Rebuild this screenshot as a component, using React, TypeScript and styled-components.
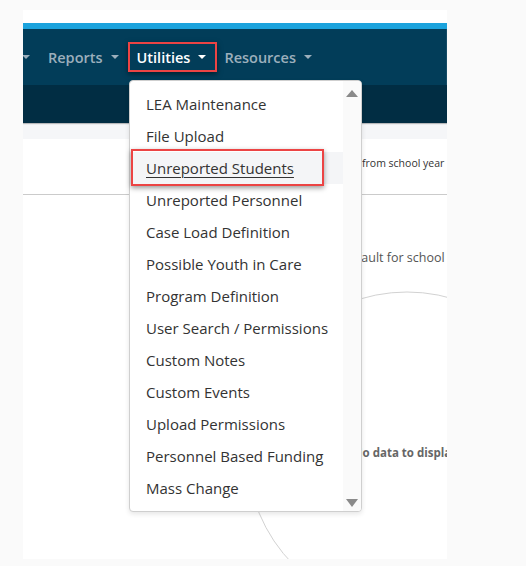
import React from "react";
import styled, { createGlobalStyle } from "styled-components";

const GlobalStyle = createGlobalStyle`
  html, body { margin: 0; padding: 0; background: #fafafa; }
  body { font-family: "Open Sans", "Noto Sans", sans-serif; }
`;

const Page = styled.div`
  width: 526px;
  height: 566px;
  padding: 10px 0 0 23px;
  box-sizing: border-box;
  overflow: hidden;
`;

const Panel = styled.div`
  position: relative;
  width: 424px;
  height: 549px;
  background: #fff;
  overflow: hidden;
  display: flex;
  flex-direction: column;
`;

const TopGap = styled.div`
  flex: none;
  height: 13px;
  background: #fff;
`;

const AccentBar = styled.div`
  flex: none;
  height: 6px;
  background: #1ba3dd;
`;

const NavBar = styled.nav`
  flex: none;
  height: 56px;
  background: #023d59;
  display: flex;
  align-items: center;
  box-shadow: inset -1px 0 0 rgba(255, 255, 255, 0.08);
`;

const NavList = styled.div`
  display: flex;
  align-items: center;
  margin-left: -3px;
`;

const NavItem = styled.div<{ $active?: boolean; $highlighted?: boolean; $leading?: boolean }>`
  display: flex;
  align-items: center;
  gap: 8px;
  height: 30px;
  padding: 0 ${(p) => (p.$highlighted ? "9px" : "7px")} 0 ${(p) => (p.$leading ? "0" : "7px")};
  margin-right: ${(p) => (p.$highlighted ? "-2px" : "0")};
  box-sizing: border-box;
  border: 2px solid ${(p) => (p.$highlighted ? "#ec4444" : "transparent")};
  box-shadow: ${(p) => (p.$highlighted ? "0 2px 5px rgba(0, 0, 0, 0.5)" : "none")};
  color: ${(p) => (p.$active ? "#ffffff" : "#9cafbc")};
  font-size: 14.5px;
  font-weight: 600;
  white-space: nowrap;
`;

const Caret = styled.span`
  width: 0;
  height: 0;
  border-left: 4px solid transparent;
  border-right: 4px solid transparent;
  border-top: 4px solid currentColor;
`;

const SubNav = styled.div`
  flex: none;
  height: 38px;
  background: #012d43;
  box-shadow: 0 1px 1px rgba(0, 0, 0, 0.25);
  position: relative;
`;

const GrayStrip = styled.div`
  flex: none;
  height: 16px;
  background: #f5f6f8;
`;

const InfoRow = styled.div`
  flex: none;
  height: 55px;
  box-sizing: border-box;
  padding: 16px 0 0 339px;
  font-size: 10.5px;
  line-height: 16px;
  color: #333;
  white-space: nowrap;
`;

const Divider = styled.div`
  flex: none;
  height: 1px;
  background: #cbcbcb;
`;

const NoteRow = styled.div`
  flex: none;
  margin-top: 55px;
  padding-left: 339px;
  font-size: 12.5px;
  line-height: 16px;
  color: #555;
  white-space: nowrap;
`;

const NoteText = styled.span`
  display: inline-block;
  margin-left: -21px;
`;

const ChartBox = styled.div`
  flex: none;
  margin: 25px 0 0 223px;
  width: 322px;
  height: 322px;
  display: grid;
  place-items: center;
  & > * {
    grid-area: 1 / 1;
  }
`;

const EmptyLabel = styled.span`
  font-size: 11.5px;
  font-weight: 700;
  color: #666;
  white-space: nowrap;
  margin-left: -3px;
`;

const Dropdown = styled.div`
  position: absolute;
  left: 106px;
  top: 70px;
  width: 233px;
  height: 432px;
  box-sizing: border-box;
  background: #fff;
  border: 1px solid #cfcfcf;
  border-radius: 4px;
  box-shadow: 0 2px 5px rgba(0, 0, 0, 0.1);
  display: flex;
  z-index: 5;
`;

const MenuList = styled.ul`
  list-style: none;
  margin: 0;
  padding: 7px 0;
  flex: 1;
`;

const MenuRow = styled.li<{ $hover?: boolean }>`
  position: relative;
  height: 32px;
  line-height: 32px;
  padding-left: 16px;
  font-size: 15px;
  color: #333;
  white-space: nowrap;
  background: ${(p) => (p.$hover ? "#f4f5f7" : "transparent")};
  text-decoration: ${(p) => (p.$hover ? "underline" : "none")};
  text-underline-offset: 3px;
  text-decoration-thickness: 1px;
`;

const Callout = styled.span`
  position: absolute;
  left: 1px;
  top: -3px;
  width: 193px;
  height: 37px;
  box-sizing: border-box;
  border: 2px solid #ec4444;
  box-shadow: 0 2px 5px rgba(0, 0, 0, 0.4);
  pointer-events: none;
`;

const ScrollTrack = styled.div`
  width: 18px;
  background: #fafafa;
  display: flex;
  flex-direction: column;
  justify-content: space-between;
  align-items: center;
  padding: 9px 0 4px;
  border-radius: 0 3px 3px 0;
`;

const Arrow = styled.span<{ $down?: boolean }>`
  width: 0;
  height: 0;
  border-left: 6.5px solid transparent;
  border-right: 6.5px solid transparent;
  ${(p) =>
    p.$down ? "border-top: 8px solid #8a8a8a;" : "border-bottom: 7px solid #8a8a8a;"}
`;

const menuItems = [
  "LEA Maintenance",
  "File Upload",
  "Unreported Students",
  "Unreported Personnel",
  "Case Load Definition",
  "Possible Youth in Care",
  "Program Definition",
  "User Search / Permissions",
  "Custom Notes",
  "Custom Events",
  "Upload Permissions",
  "Personnel Based Funding",
  "Mass Change",
];

export default function App() {
  return (
    <>
      <GlobalStyle />
      <Page>
        <Panel>
          <TopGap />
          <AccentBar />
          <NavBar>
            <NavList>
              <NavItem $leading>
                <Caret />
              </NavItem>
              <NavItem>
                Reports
                <Caret />
              </NavItem>
              <NavItem $active $highlighted>
                Utilities
                <Caret />
              </NavItem>
              <NavItem>
                Resources
                <Caret />
              </NavItem>
            </NavList>
          </NavBar>
          <SubNav />
          <GrayStrip />
          <InfoRow>from school year</InfoRow>
          <Divider />
          <NoteRow>
            <NoteText>Default for school year</NoteText>
          </NoteRow>
          <ChartBox>
            <svg width="322" height="322" viewBox="0 0 322 322">
              <circle cx="161" cy="161" r="160" fill="none" stroke="#d2d2d2" strokeWidth="1" />
            </svg>
            <EmptyLabel>No data to display</EmptyLabel>
          </ChartBox>

          <Dropdown>
            <MenuList>
              {menuItems.map((item) => (
                <MenuRow key={item} $hover={item === "Unreported Students"}>
                  {item}
                  {item === "Unreported Students" && <Callout />}
                </MenuRow>
              ))}
            </MenuList>
            <ScrollTrack>
              <Arrow />
              <Arrow $down />
            </ScrollTrack>
          </Dropdown>
        </Panel>
      </Page>
    </>
  );
}
